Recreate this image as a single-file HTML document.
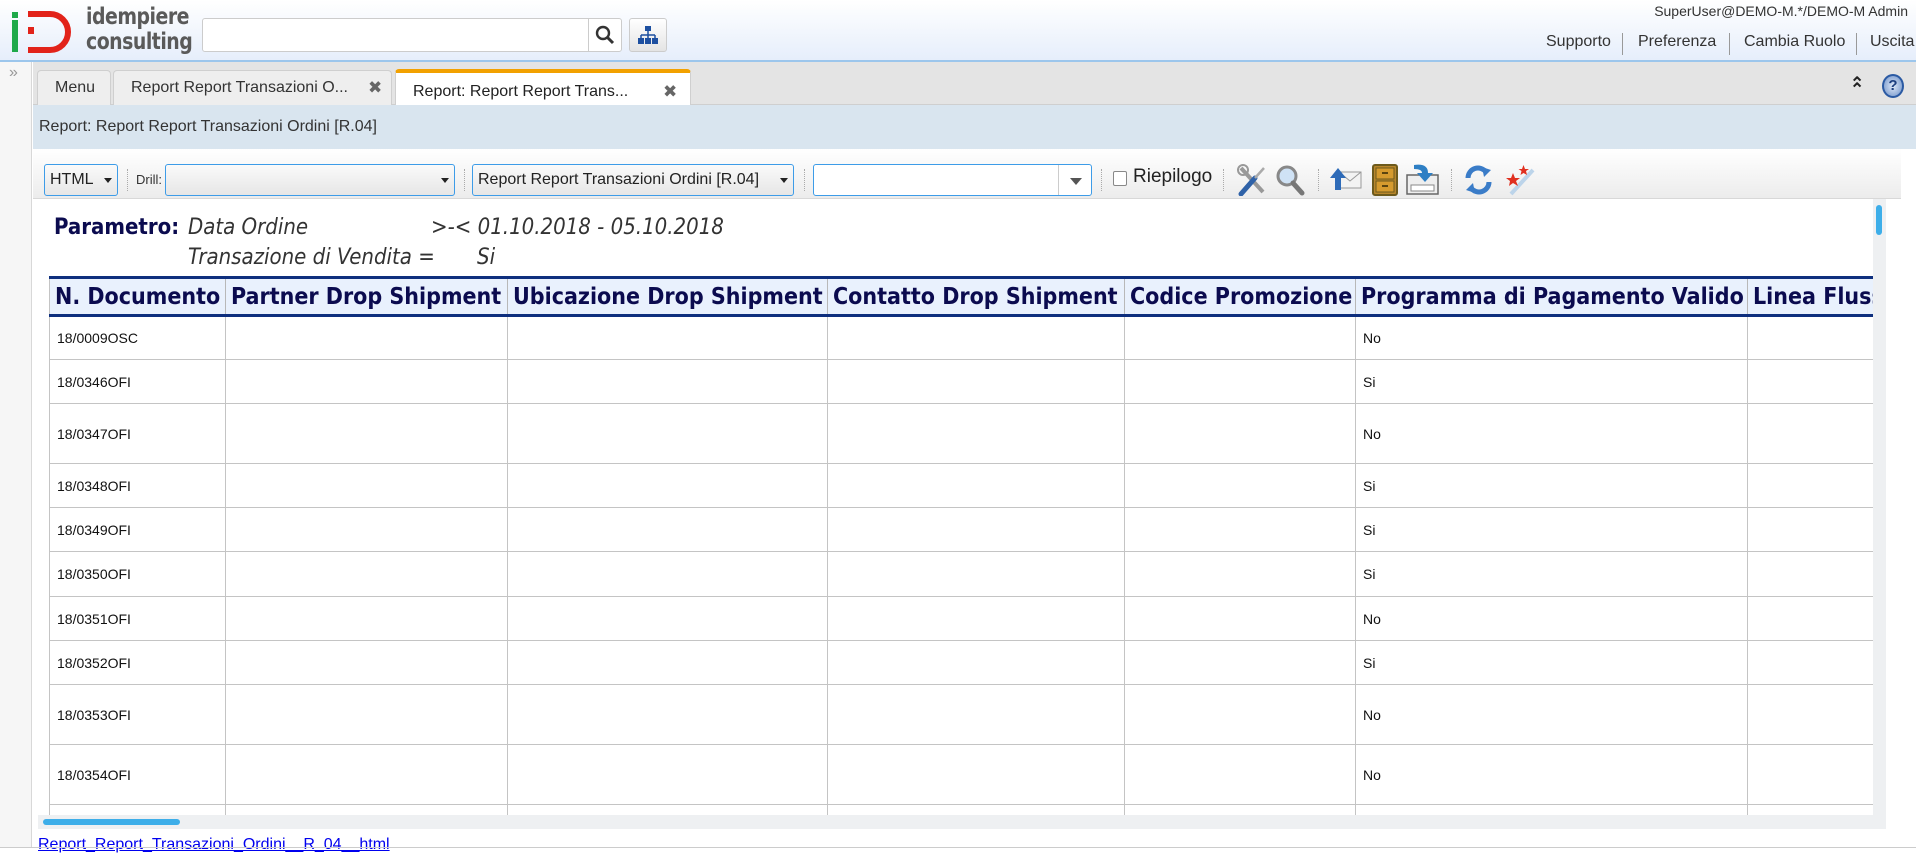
<!DOCTYPE html>
<html><head><meta charset="utf-8">
<style>
*{box-sizing:border-box;margin:0;padding:0}
body{width:1916px;height:848px;overflow:hidden;background:#fff;font-family:"Liberation Sans",sans-serif;position:relative;color:#333}
.a{position:absolute}
#hdr{left:0;top:0;width:1916px;height:62px;background:linear-gradient(#fff,#e6eefb);border-bottom:2px solid #9cc6ec}
.lnk{font-size:16px;color:#333;top:33px}
.sepv{width:1px;height:22px;background:#999;top:33px}
#side{left:0;top:62px;width:32px;height:786px;background:#f6f6f6;border-right:1px solid #d8d8d8}
#tabbar{left:33px;top:62px;width:1883px;height:43px;background:#e4e4e4;border-bottom:1px solid #cfcfcf}
.tab{top:70px;height:35px;background:#eee;border:1px solid #cfcfcf;border-bottom:none;border-radius:4px 4px 0 0;font-size:16px;color:#333;line-height:34px;padding-left:17px}
#crumb{left:33px;top:105px;width:1883px;height:44px;background:#d9e5ef;font-size:16px;line-height:44px;padding-left:6px;color:#333}
#tb{left:33px;top:149px;width:1868px;height:50px;background:linear-gradient(#fff,#ececec);border-bottom:1px solid #d8d8d8}
.sel{top:164px;height:32px;border:1px solid #3d9ce8;border-radius:3px;background:linear-gradient(#fafafa,#e6e6e6);font-size:16px;line-height:30px;padding-left:5px;color:#222}
.sel:after{content:"";position:absolute;right:5px;top:13px;border-left:4px solid transparent;border-right:4px solid transparent;border-top:5px solid #222}
.dsep{top:169px;height:22px;border-left:1px dotted #aaa}
#rep{left:38px;top:199px;width:1835px;height:616px;overflow:hidden;background:#fff}
.par{font-family:"DejaVu Sans Condensed","DejaVu Sans",sans-serif;font-size:22px;color:#333;font-style:italic}
table{position:absolute;left:11px;top:77px;border-collapse:collapse;table-layout:fixed;width:1900px}
th{background:#e9f1fd;border-top:3px solid #0e2f7e;border-bottom:3px solid #0e2f7e;border-left:1px solid #b8b8b8;font-family:"DejaVu Sans Condensed","DejaVu Sans",sans-serif;font-weight:bold;font-size:23px;color:#0b0b4f;text-align:left;padding:0 5px;height:38px;white-space:nowrap;overflow:hidden}
td{border:1px solid #c4c4c4;font-size:14px;color:#111;padding-left:7px;white-space:nowrap}
th:first-child,td:first-child{border-left:1px solid #c4c4c4}
</style></head><body>
<div id="hdr" class="a">
 <div class="a" style="left:12px;top:12px;width:6px;height:6px;background:#1fa94a"></div>
 <div class="a" style="left:12px;top:20px;width:6px;height:32px;background:#1fa94a"></div>
 <div class="a" style="left:28px;top:27px;width:6px;height:7px;background:#e2231a"></div>
 <svg class="a" style="left:26px;top:10px" width="48" height="44"><path d="M2 4 H24 A18 18 0 0 1 24 40 H2" fill="none" stroke="#e2231a" stroke-width="6"/></svg>
 <div class="a" style="left:86px;top:4px;font-family:'DejaVu Sans Condensed','DejaVu Sans',sans-serif;font-weight:bold;font-size:21px;line-height:23px;color:#5a5a5a;letter-spacing:-0.5px;transform:scaleY(1.1);transform-origin:top left">idempiere<br>consulting</div>
 <div class="a" style="left:202px;top:18px;width:420px;height:34px;background:#fff;border:1px solid #ccc;border-radius:3px"></div>
 <div class="a" style="left:588px;top:19px;width:1px;height:32px;background:#ccc"></div>
 <svg class="a" style="left:595px;top:25px" width="20" height="20"><circle cx="8" cy="8" r="6" fill="none" stroke="#333" stroke-width="2.4"/><path d="M12.5 12.5 L18 18" stroke="#333" stroke-width="3"/></svg>
 <div class="a" style="left:629px;top:18px;width:38px;height:34px;background:linear-gradient(#fff,#e4e4e4);border:1px solid #ccc;border-radius:3px"></div>
 <svg class="a" style="left:638px;top:25px" width="20" height="20"><rect x="7" y="1" width="6" height="5" fill="#1d4fa0"/><path d="M10 6V10M3 10H17M3 10V13M10 10V13M17 10V13" stroke="#1d4fa0" stroke-width="1.5" fill="none"/><rect x="0" y="13" width="6" height="6" fill="#1d4fa0"/><rect x="7" y="13" width="6" height="6" fill="#1d4fa0"/><rect x="14" y="13" width="6" height="6" fill="#1d4fa0"/></svg>
 <div class="a" style="right:8px;top:3px;font-size:14px;color:#333">SuperUser@DEMO-M.*/DEMO-M Admin</div>
 <div class="a lnk" style="left:1546px">Supporto</div>
 <div class="a sepv" style="left:1622px"></div>
 <div class="a lnk" style="left:1638px">Preferenza</div>
 <div class="a sepv" style="left:1729px"></div>
 <div class="a lnk" style="left:1744px">Cambia Ruolo</div>
 <div class="a sepv" style="left:1856px"></div>
 <div class="a lnk" style="left:1870px">Uscita</div>
</div>
<div id="side" class="a"><div class="a" style="left:9px;top:2px;font-size:16px;color:#999">»</div></div>
<div id="tabbar" class="a"></div>
<div class="a tab" style="left:37px;width:74px">Menu</div>
<div class="a tab" style="left:113px;width:279px">Report Report Transazioni O... <span style="position:absolute;left:254px;color:#666;font-size:17px">✖</span></div>
<div class="a tab" style="left:395px;top:69px;height:37px;width:296px;background:#fff;border-top:4px solid #f2a100;font-size:16px;color:#222;padding-top:2px">Report: Report Report Trans... <span style="position:absolute;left:267px;color:#666;font-size:17px">✖</span></div>
<div class="a" style="left:1850px;top:74px;font-size:17px;color:#222;font-weight:bold">&#8963;</div>
<div class="a" style="left:1850px;top:80px;font-size:17px;color:#222;font-weight:bold">&#8963;</div>
<div class="a" style="left:1882px;top:74px;width:22px;height:24px;border-radius:50%;background:radial-gradient(#dfe9f8,#6b8fc7);border:2px solid #2b5aa3;color:#1d3f80;font-weight:bold;font-size:15px;text-align:center;line-height:20px">?</div>
<div id="crumb" class="a">Report: Report Report Transazioni Ordini [R.04]</div>
<div id="tb" class="a"></div>
<div class="a sel" style="left:44px;width:74px">HTML</div>
<div class="a dsep" style="left:127px"></div>
<div class="a" style="left:136px;top:172px;font-size:13px;color:#333">Drill:</div>
<div class="a sel" style="left:165px;width:290px"></div>
<div class="a dsep" style="left:464px"></div>
<div class="a sel" style="left:472px;width:322px">Report Report Transazioni Ordini [R.04]</div>
<div class="a dsep" style="left:804px"></div>
<div class="a" style="left:813px;top:164px;width:279px;height:32px;border:1px solid #3d9ce8;border-radius:3px;background:#fff"></div>
<div class="a" style="left:1058px;top:165px;width:1px;height:30px;background:#ccc"></div>
<div class="a" style="left:1070px;top:178px;border-left:6px solid transparent;border-right:6px solid transparent;border-top:7px solid #555"></div>
<div class="a dsep" style="left:1101px"></div>
<div class="a" style="left:1113px;top:171px;width:14px;height:15px;border:1px solid #888;border-radius:2px;background:#fff"></div>
<div class="a" style="left:1133px;top:166px;font-size:19px;color:#222">Riepilogo</div>
<div class="a dsep" style="left:1223px"></div>
<svg class="a" style="left:1237px;top:164px" width="30" height="32"><path d="M4 4 L26 28" stroke="#999" stroke-width="4"/><path d="M4 30 L18 14" stroke="#2f62a8" stroke-width="5" stroke-linecap="round"/><path d="M18 14 L27 4" stroke="#aaa" stroke-width="2.5"/><circle cx="6" cy="6" r="5" fill="none" stroke="#999" stroke-width="2"/></svg>
<svg class="a" style="left:1275px;top:164px" width="30" height="32"><circle cx="12" cy="12" r="9" fill="#cfe2f5" stroke="#888" stroke-width="3"/><path d="M18 19 L27 29" stroke="#777" stroke-width="5" stroke-linecap="round"/></svg>
<div class="a dsep" style="left:1318px"></div>
<svg class="a" style="left:1330px;top:166px" width="32" height="28"><rect x="9" y="6" width="22" height="16" fill="#f3f3f3" stroke="#999"/><path d="M9 6 L20 15 L31 6" fill="none" stroke="#999"/><path d="M8 2 L0 12 H5 V24 H11 V12 H16 Z" fill="#2e6bb8"/></svg>
<svg class="a" style="left:1372px;top:164px" width="26" height="32"><rect x="1" y="1" width="24" height="30" rx="2" fill="#b8862b" stroke="#6d5a1c" stroke-width="2"/><rect x="4" y="4" width="18" height="11" fill="#d69b2e" stroke="#6d5a1c"/><rect x="4" y="17" width="18" height="11" fill="#d69b2e" stroke="#6d5a1c"/><rect x="10" y="8" width="6" height="2" fill="#5a4410"/><rect x="10" y="21" width="6" height="2" fill="#5a4410"/></svg>
<svg class="a" style="left:1406px;top:163px" width="33" height="33"><rect x="1" y="12" width="31" height="19" fill="#eee" stroke="#666" stroke-width="1.5"/><rect x="5" y="22" width="23" height="6" fill="#fff" stroke="#888"/><path d="M8 2 Q22 0 22 10 H27 L19 19 L11 10 H16 Q16 6 8 6Z" fill="#2e7fc4"/></svg>
<div class="a dsep" style="left:1451px"></div>
<svg class="a" style="left:1464px;top:164px" width="29" height="32"><path d="M4 14 A10 10 0 0 1 22 8" fill="none" stroke="#3a7cc8" stroke-width="5"/><path d="M18 3 L27 6 L20 13Z" fill="#3a7cc8"/><path d="M25 18 A10 10 0 0 1 7 24" fill="none" stroke="#3a7cc8" stroke-width="5"/><path d="M11 29 L2 26 L9 19Z" fill="#3a7cc8"/></svg>
<svg class="a" style="left:1505px;top:164px" width="31" height="32"><path d="M6 30 L28 6" stroke="#bcd4ea" stroke-width="4"/><path d="M6 14 l2 -5 2 5 5 0 -4 3 2 5 -5 -3 -4 3 1 -5 -4 -3z" fill="#e03020"/><path d="M17 5 l1.5 -4 1.5 4 4 0 -3 2 1 4 -3.5 -2 -3 2 1 -4 -3 -2z" fill="#e03020"/></svg>

<div id="rep" class="a">
 <div class="a" style="left:16px;top:16px;font-family:'DejaVu Sans Condensed','DejaVu Sans',sans-serif;font-size:22px;color:#0b0b4f;font-weight:bold">Parametro:</div>
 <div class="a par" style="left:150px;top:16px">Data Ordine</div>
 <div class="a par" style="left:393px;top:16px">&gt;-&lt; 01.10.2018 - 05.10.2018</div>
 <div class="a par" style="left:150px;top:46px">Transazione di Vendita =</div>
 <div class="a par" style="left:439px;top:46px">Si</div>
 <table>
  <colgroup><col style="width:176px"><col style="width:282px"><col style="width:320px"><col style="width:297px"><col style="width:231px"><col style="width:392px"><col style="width:202px"></colgroup>
  <tr><th>N. Documento</th><th>Partner Drop Shipment</th><th>Ubicazione Drop Shipment</th><th>Contatto Drop Shipment</th><th>Codice Promozione</th><th>Programma di Pagamento Valido</th><th>Linea Flusso</th></tr>
  <tr style="height:44px"><td>18/0009OSC</td><td></td><td></td><td></td><td></td><td>No</td><td></td></tr>
  <tr style="height:44px"><td>18/0346OFI</td><td></td><td></td><td></td><td></td><td>Si</td><td></td></tr>
  <tr style="height:60px"><td>18/0347OFI</td><td></td><td></td><td></td><td></td><td>No</td><td></td></tr>
  <tr style="height:44px"><td>18/0348OFI</td><td></td><td></td><td></td><td></td><td>Si</td><td></td></tr>
  <tr style="height:44px"><td>18/0349OFI</td><td></td><td></td><td></td><td></td><td>Si</td><td></td></tr>
  <tr style="height:45px"><td>18/0350OFI</td><td></td><td></td><td></td><td></td><td>Si</td><td></td></tr>
  <tr style="height:44px"><td>18/0351OFI</td><td></td><td></td><td></td><td></td><td>No</td><td></td></tr>
  <tr style="height:44px"><td>18/0352OFI</td><td></td><td></td><td></td><td></td><td>Si</td><td></td></tr>
  <tr style="height:60px"><td>18/0353OFI</td><td></td><td></td><td></td><td></td><td>No</td><td></td></tr>
  <tr style="height:60px"><td>18/0354OFI</td><td></td><td></td><td></td><td></td><td>No</td><td></td></tr>
  <tr style="height:60px"><td>18/0355OFI</td><td></td><td></td><td></td><td></td><td>No</td><td></td></tr>
 </table>
</div>
<div class="a" style="left:1873px;top:199px;width:13px;height:616px;background:#eef0f2"></div>
<div class="a" style="left:1876px;top:205px;width:6px;height:30px;background:#3daee9;border-radius:3px"></div>
<div class="a" style="left:38px;top:815px;width:1848px;height:14px;background:#eef0f2"></div>
<div class="a" style="left:43px;top:819px;width:137px;height:6px;background:#3daee9;border-radius:3px"></div>
<div class="a" style="left:38px;top:836px;font-size:16px;color:#00e;text-decoration:underline">Report_Report_Transazioni_Ordini__R_04__html</div>
<div class="a" style="left:0;top:847px;width:1916px;height:1px;background:#ccc"></div>
</body></html>
